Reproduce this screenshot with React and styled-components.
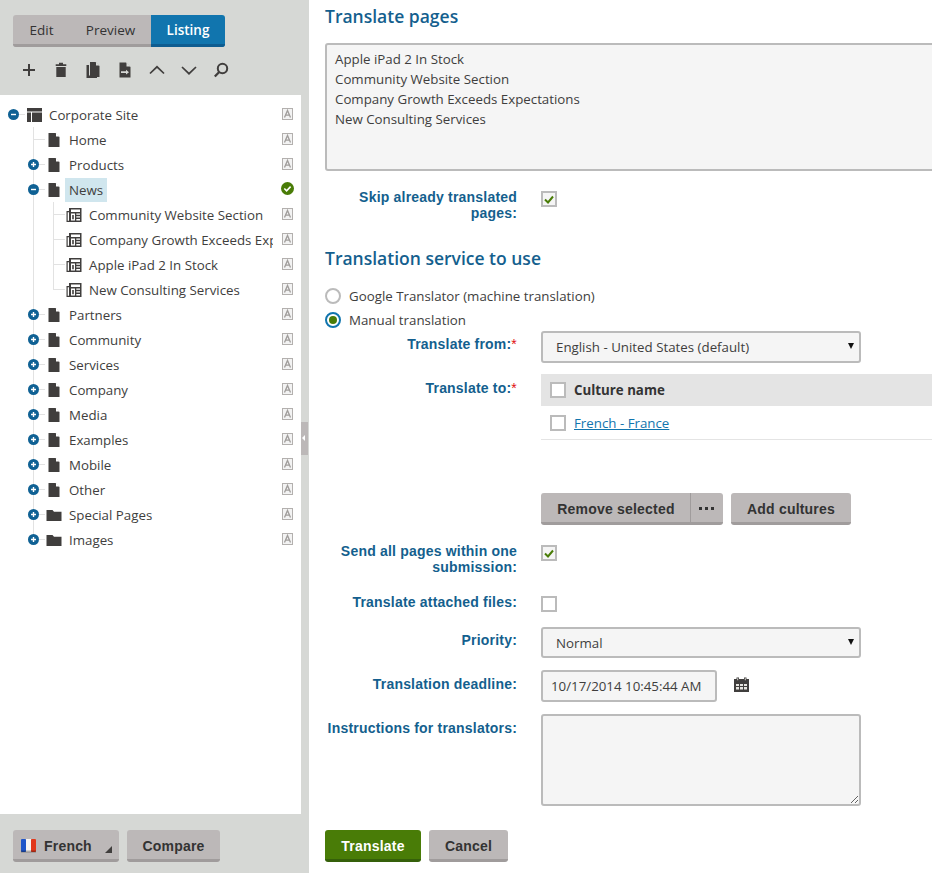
import React from 'react'
import styled, {createGlobalStyle} from 'styled-components'

const GlobalStyle = createGlobalStyle`
    html, body {
        margin: 0;
        padding: 0;
        background: #fff;
    }
    body {
        font-family: "Open Sans", "Noto Sans", sans-serif;
        font-size: 13.3px;
        color: #403e3d;
    }
`

const TREE = [
    {name: 'Home', icon: 'page'},
    {name: 'Products', icon: 'page', toggle: 'plus'},
    {
        name: 'News', icon: 'page', toggle: 'minus', selected: true, done: true,
        children: ['Community Website Section', 'Company Growth Exceeds Expectations', 'Apple iPad 2 In Stock', 'New Consulting Services'],
    },
    {name: 'Partners', icon: 'page', toggle: 'plus'},
    {name: 'Community', icon: 'page', toggle: 'plus'},
    {name: 'Services', icon: 'page', toggle: 'plus'},
    {name: 'Company', icon: 'page', toggle: 'plus'},
    {name: 'Media', icon: 'page', toggle: 'plus'},
    {name: 'Examples', icon: 'page', toggle: 'plus'},
    {name: 'Mobile', icon: 'page', toggle: 'plus'},
    {name: 'Other', icon: 'page', toggle: 'plus'},
    {name: 'Special Pages', icon: 'folder', toggle: 'plus'},
    {name: 'Images', icon: 'folder', toggle: 'plus'},
]

/* icons */
const Glyph = ({size = 16, children}) => (
    <svg width={size} height={size} viewBox="0 0 16 16" fill="#403e3d">{children}</svg>
)

const PlusIcon = () => <Glyph><path d="M7 2h2v5h5v2H9v5H7V9H2V7h5z"/></Glyph>
const TrashIcon = () => <Glyph><path d="M6 .8h4V2.300h3.300v1.700H2.700V2.300H6zM3.300 5h9.400V15H3.300z"/></Glyph>
const CopyIcon = () => (
    <Glyph>
        <path d="M5 0h5.500L14.500 4v11H5z"/>
        <path d="M11 0l3.500 3.500H11z" fill="#d6d8d5"/>
        <path d="M1.500 3H4v10.500h8V16H1.500z"/>
    </Glyph>
)
const MoveIcon = () => (
    <Glyph>
        <path d="M2.500 .5h6.500L13.500 5v10.500h-11z"/>
        <path d="M9.500 .5l4 4h-4z" fill="#d6d8d5"/>
        <path d="M4 9.300h5V7.800L12 10.200l-3 2.400v-1.500H4z" fill="#d6d8d5"/>
    </Glyph>
)
const UpIcon = () => <Glyph><path d="M1 11.500L8 4.800l7 6.700" fill="none" stroke="#403e3d" strokeWidth="1.700"/></Glyph>
const DownIcon = () => <Glyph><path d="M1 5L8 11.700 15 5" fill="none" stroke="#403e3d" strokeWidth="1.700"/></Glyph>
const SearchIcon = () => (
    <Glyph>
        <circle cx="9.500" cy="6.500" r="4.700" fill="none" stroke="#403e3d" strokeWidth="2"/>
        <path d="M6.500 9.800L1.800 14.500" stroke="#403e3d" strokeWidth="2.300" fill="none"/>
    </Glyph>
)
const SiteIcon = () => (
    <Glyph>
        <path d="M1 1h15v3.500H1zM1 5.500h4V15H1zM6 5.500h10V15H6z"/>
    </Glyph>
)
const PageIcon = () => (
    <Glyph>
        <path d="M2.500 1h7L13.500 5v10h-11z"/>
        <path d="M10 1l3.500 3.500H10z" fill="#fff"/>
    </Glyph>
)
const FolderIcon = () => (
    <Glyph><path d="M.5 3h6l1.500 1.800h7.500V14H.5z"/></Glyph>
)
const NewsIcon = () => (
    <Glyph>
        <path d="M3 1h12.500v14H.5V4H3z"/>
        <path d="M1.700 5.200H3V13.800H1.700z" fill="#fff"/>
        <path d="M5 2.500h9v2.500H5zM5 6.500h4v7H5zM10.300 6.500H14v1.300h-3.700zM10.300 9.300H14v1.300h-3.700zM10.300 12H14v1.500h-3.700z" fill="#fff"/>
        <path d="M6.200 8h1.600v4.200H6.200z"/>
    </Glyph>
)
const LangIcon = () => (
    <svg width="11" height="12" viewBox="0 0 11 12">
        <rect x="0.500" y="0.500" width="10" height="11" fill="#f3f3f3" stroke="#b3b0ae"/>
        <path d="M2.500 9.500L5.500 2.500 8.500 9.500M3.500 7.200h4" fill="none" stroke="#a09d9b" strokeWidth="1.300"/>
    </svg>
)
const DoneIcon = () => (
    <DoneSvg width="13" height="13" viewBox="0 0 13 13">
        <circle cx="6.500" cy="6.500" r="6.500" fill="#497c07"/>
        <path d="M3.300 6.500l2.300 2.300 4-4.200" fill="none" stroke="#fff" strokeWidth="1.600"/>
    </DoneSvg>
)
const ToggleIcon = ({kind}) => (
    <svg width="11" height="11" viewBox="0 0 11 11">
        <circle cx="5.500" cy="5.500" r="5.500" fill="#0f6194"/>
        <path d={kind === 'plus' ? 'M3 5.500h5M5.500 3v5' : 'M3 5.500h5'} stroke="#fff" strokeWidth="1.400"/>
    </svg>
)
const FlagIcon = () => (
    <svg width="15" height="14" viewBox="0 0 15 14">
        <rect x="0" y="0" width="5" height="13" rx="1" fill="#1f55c9"/>
        <rect x="5" y="0" width="5" height="13" fill="#f7f4f2"/>
        <rect x="10" y="0" width="5" height="13" rx="1" fill="#e2381c"/>
        <rect x="0" y="11.500" width="15" height="2" fill="#000" opacity="0.3"/>
    </svg>
)
const CalendarIcon = () => (
    <svg width="15" height="15" viewBox="0 0 15 15" fill="#403e3d">
        <path d="M0 2h2.500V.5h2.500V2h5V.5h2.500V2H15v13H0z"/>
        <path d="M3.200 1.300h1v2h-1zM10.800 1.300h1v2h-1z" fill="#d8d6d2"/>
        <path d="M2 7h3v2H2zM6 7h3v2H6zM10 7h3v2h-3zM2 10h3v2.500H2zM6 10h3v2.500H6zM10 10h3v2.500h-3z" fill="#e6e4e0"/>
    </svg>
)
const TickIcon = () => (
    <svg width="10" height="9" viewBox="0 0 10 9">
        <path d="M1 4.500l3 3 5-6" fill="none" stroke="#497c07" strokeWidth="2"/>
    </svg>
)
const DotsIcon = () => (
    <svg width="16" height="3" viewBox="0 0 16 3" fill="#333">
        <path d="M0 0h3v3H0zM6 0h3v3H6zM12 0h3v3h-3z"/>
    </svg>
)

const TOOLBAR = [PlusIcon, TrashIcon, CopyIcon, MoveIcon, UpIcon, DownIcon, SearchIcon]
const PAGE_ICONS = {page: PageIcon, folder: FolderIcon}

function TreeRow({depth, toggle, icon: Icon, name, selected, marker}) {
    return (
        <Row $depth={depth}>
            <Stub $depth={depth}/>
            <ToggleSlot>{toggle && <ToggleIcon kind={toggle}/>}</ToggleSlot>
            <IconSlot><Icon/></IconSlot>
            <NameClip><Name $selected={selected}>{name}</Name></NameClip>
            <Marker>{marker}</Marker>
        </Row>
    )
}

export default function App() {
    return (
        <Page>
            <GlobalStyle/>
            <Sidebar>
                <SideColumn>
                    <SideTop>
                        <Tabs>
                            <Tab $width={57}>Edit</Tab>
                            <Tab $width={81}>Preview</Tab>
                            <Tab $width={74} $active>Listing</Tab>
                        </Tabs>
                        <Toolbar>
                            {TOOLBAR.map((Icon, i) => <ToolButton key={i}><Icon/></ToolButton>)}
                        </Toolbar>
                    </SideTop>

                    <Tree>
                        <TreeRow depth={0} toggle="minus" icon={SiteIcon} name="Corporate Site" marker={<LangIcon/>}/>
                        <Branch $depth={1}>
                            {TREE.map(item => (
                                <React.Fragment key={item.name}>
                                    <TreeRow
                                        depth={1}
                                        toggle={item.toggle}
                                        icon={PAGE_ICONS[item.icon]}
                                        name={item.name}
                                        selected={item.selected}
                                        marker={item.done ? <DoneIcon/> : <LangIcon/>}
                                    />
                                    {item.children && (
                                        <Branch $depth={2}>
                                            {item.children.map(child => (
                                                <TreeRow key={child} depth={2} icon={NewsIcon} name={child} marker={<LangIcon/>}/>
                                            ))}
                                        </Branch>
                                    )}
                                </React.Fragment>
                            ))}
                        </Branch>
                    </Tree>

                    <SideBottom>
                        <FlagButton $width={106}>
                            <FlagIcon/>
                            <span>French</span>
                            <Corner/>
                        </FlagButton>
                        <GrayButton $width={93}>Compare</GrayButton>
                    </SideBottom>
                </SideColumn>
                <Splitter><SplitHandle/></Splitter>
            </Sidebar>

            <Content>
                <Heading>Translate pages</Heading>
                <PagesBox>
                    <div>Apple iPad 2 In Stock</div>
                    <div>Community Website Section</div>
                    <div>Company Growth Exceeds Expectations</div>
                    <div>New Consulting Services</div>
                </PagesBox>

                <FormRow $top={18}>
                    <Label>Skip already translated pages:</Label>
                    <CheckWrap><Check $on/></CheckWrap>
                </FormRow>

                <Heading $top={25}>Translation service to use</Heading>
                <Radios>
                    <RadioRow><Radio/>Google Translator (machine translation)</RadioRow>
                    <RadioRow><Radio $on/>Manual translation</RadioRow>
                </Radios>

                <FormRow $top={-1}>
                    <Label $pad={5}>Translate from:<Req>*</Req></Label>
                    <Select $height={32}>English - United States (default)</Select>
                </FormRow>

                <FormRow $top={11}>
                    <Label $pad={6}>Translate to:<Req>*</Req></Label>
                    <div>
                        <GridHead><Check/>Culture name</GridHead>
                        <GridRow><Check/><CultureLink href="#">French - France</CultureLink></GridRow>
                        <GridActions>
                            <ButtonGroup>
                                <GroupButton>Remove selected</GroupButton>
                                <DotsButton><DotsIcon/></DotsButton>
                            </ButtonGroup>
                            <GrayButton $width={120}>Add cultures</GrayButton>
                        </GridActions>
                    </div>
                </FormRow>

                <FormRow $top={18}>
                    <Label>Send all pages within one submission:</Label>
                    <CheckWrap><Check $on/></CheckWrap>
                </FormRow>

                <FormRow $top={19}>
                    <Label>Translate attached files:</Label>
                    <CheckWrap><Check/></CheckWrap>
                </FormRow>

                <FormRow $top={15}>
                    <Label $pad={5}>Priority:</Label>
                    <Select $height={31}>Normal</Select>
                </FormRow>

                <FormRow $top={12}>
                    <Label $pad={6}>Translation deadline:</Label>
                    <DateRow>
                        <DateInput readOnly value="10/17/2014 10:45:44 AM"/>
                        <CalendarSlot><CalendarIcon/></CalendarSlot>
                    </DateRow>
                </FormRow>

                <FormRow $top={12}>
                    <Label $pad={6}>Instructions for translators:</Label>
                    <Notes/>
                </FormRow>

                <Actions>
                    <GreenButton>Translate</GreenButton>
                    <GrayButton $width={79}>Cancel</GrayButton>
                </Actions>
            </Content>
        </Page>
    )
}

const DoneSvg = styled.svg`
    margin-top: -1px;
`

const Page = styled.div`
    display: flex;
    width: 932px;
    height: 873px;
    overflow: hidden;
`

const Sidebar = styled.aside`
    flex: 0 0 309px;
    display: flex;
    background: #d6d8d5;
`

const SideColumn = styled.div`
    width: 301px;
    display: flex;
    flex-direction: column;
`

const SideTop = styled.div`
    height: 95px;
    padding: 15px 0 0 13px;
    box-sizing: border-box;
`

const Tabs = styled.div`
    display: inline-flex;
    height: 32px;
    border-radius: 3px;
    overflow: hidden;
`

const Tab = styled.div`
    display: flex;
    align-items: center;
    justify-content: center;
    box-sizing: border-box;
    width: ${p => p.$width}px;
    font-size: 13.5px;
    font-weight: ${p => p.$active ? 600 : 400};
    color: ${p => p.$active ? '#fff' : '#333'};
    background: ${p => p.$active ? '#1175ae' : '#bcb8b8'};
    border-bottom: 3px solid ${p => p.$active ? '#0e5c90' : '#a09c9c'};
`

const Toolbar = styled.div`
    display: flex;
    margin: 7px 0 0 0;
`

const ToolButton = styled.div`
    width: 32px;
    height: 32px;
    display: flex;
    align-items: center;
    justify-content: center;
`

const Tree = styled.div`
    flex: 1;
    background: #fff;
    padding-top: 7px;
`

const Branch = styled.div`
    position: relative;

    &::before {
        content: '';
        position: absolute;
        left: ${p => p.$depth === 1 ? 33 : 53}px;
        top: 0;
        bottom: 12px;
        width: 1px;
        background: #e2e2e2;
    }
`

const Row = styled.div`
    position: relative;
    display: flex;
    align-items: center;
    height: 25px;
    padding-left: ${p => 8 + (p.$depth * 20)}px;
    padding-right: 7px;
`

const Stub = styled.span`
    position: absolute;
    left: ${p => 13 + (p.$depth * 20)}px;
    top: 12px;
    width: 12px;
    height: 1px;
    background: #e2e2e2;
`

const ToggleSlot = styled.span`
    position: relative;
    flex: 0 0 11px;
    display: flex;
    height: 11px;
    margin-right: 7px;
`

const IconSlot = styled.span`
    position: relative;
    flex: 0 0 16px;
    display: flex;
    margin-right: 3px;
`

const NameClip = styled.span`
    flex: 1;
    overflow: hidden;
    white-space: nowrap;
    margin-right: 8px;
`

const Name = styled.span`
    display: inline-block;
    padding: 0 4px;
    line-height: 24px;
    background: ${p => p.$selected ? '#d0e6ee' : 'transparent'};
`

const Marker = styled.span`
    flex: 0 0 13px;
    display: flex;
    justify-content: center;
    margin-top: -1px;
`

const SideBottom = styled.div`
    height: 59px;
    padding: 16px 0 0 13px;
    box-sizing: border-box;
    display: flex;
    gap: 8px;
`

const Splitter = styled.div`
    position: relative;
    flex: 1;
`

const SplitHandle = styled.div`
    position: absolute;
    top: 422px;
    left: 0;
    width: 7px;
    height: 33px;
    background: #bcb8b8;

    &::after {
        content: '';
        position: absolute;
        left: 1px;
        top: 13px;
        border: 3px solid transparent;
        border-right-color: #fff;
        border-left-width: 0;
    }
`

const GrayButton = styled.div`
    position: relative;
    width: ${p => p.$width}px;
    height: 32px;
    box-sizing: border-box;
    display: flex;
    align-items: center;
    justify-content: center;
    padding-top: 2px;
    border-radius: 3px;
    background: #bcb8b8;
    border-bottom: 3px solid #a09c9c;
    font-family: "Liberation Sans", Arial, sans-serif;
    font-size: 14px;
    font-weight: 700;
    color: #333;
    letter-spacing: 0.2px;
`

const FlagButton = styled(GrayButton)`
    justify-content: flex-start;
    gap: 8px;
    padding-left: 8px;
`

const Corner = styled.i`
    position: absolute;
    right: 7px;
    bottom: 6px;
    border-style: solid;
    border-width: 0 0 7px 7px;
    border-color: transparent transparent #403e3d transparent;
`

const Content = styled.main`
    flex: 1;
    min-width: 0;
    padding-left: 16px;
    overflow: hidden;
`

const Heading = styled.h2`
    margin: ${p => p.$top ?? 4}px 0 0;
    font-size: 17.5px;
    line-height: 24px;
    font-weight: 600;
    color: #145f8e;
`

const PagesBox = styled.div`
    width: 640px;
    height: 128px;
    box-sizing: border-box;
    margin-top: 15px;
    padding: 4px 8px;
    border: 2px solid #bbb;
    border-radius: 3px;
    background: #f5f5f5;
    line-height: 20px;
`

const FormRow = styled.div`
    display: grid;
    grid-template-columns: 192px 1fr;
    column-gap: 24px;
    margin-top: ${p => p.$top}px;
`

const Label = styled.label`
    padding-top: ${p => p.$pad ?? 0}px;
    text-align: right;
    font-family: "Liberation Sans", Arial, sans-serif;
    font-size: 14px;
    line-height: 16px;
    font-weight: 700;
    color: #145f8e;
    letter-spacing: 0.2px;
`

const Req = styled.span`
    color: #e01010;
    font-weight: 400;
`

const CheckWrap = styled.div`
    display: flex;
    padding-top: 2px;
`

const Check = styled.span.attrs(p => ({children: p.$on ? <TickIcon/> : null}))`
    flex: 0 0 16px;
    width: 16px;
    height: 16px;
    box-sizing: border-box;
    display: flex;
    align-items: center;
    justify-content: center;
    border: 2px solid #bbb;
    background: ${p => p.$on ? '#f5f5f5' : '#fff'};
`

const Radios = styled.div`
    margin-top: 14px;
`

const RadioRow = styled.div`
    display: flex;
    align-items: center;
    gap: 8px;
    height: 24px;
`

const Radio = styled.span`
    width: 16px;
    height: 16px;
    box-sizing: border-box;
    border-radius: 50%;
    border: 2px solid ${p => p.$on ? '#1175ae' : '#bbb'};
    background: #fff;
    padding: 2px;

    &::after {
        content: '';
        display: ${p => p.$on ? 'block' : 'none'};
        width: 8px;
        height: 8px;
        border-radius: 50%;
        background: #497c07;
    }
`

const Select = styled.div`
    position: relative;
    width: 320px;
    height: ${p => p.$height}px;
    box-sizing: border-box;
    display: flex;
    align-items: center;
    padding-left: 13px;
    border: 2px solid #bbb;
    border-radius: 3px;
    background: #f5f5f5;

    &::after {
        content: '';
        position: absolute;
        right: 5px;
        top: 10px;
        border-style: solid;
        border-width: 6px 3px 0 3px;
        border-color: #111 transparent transparent transparent;
    }
`

const GridHead = styled.div`
    display: flex;
    align-items: center;
    gap: 8px;
    height: 32px;
    padding-left: 9px;
    background: #e4e4e4;
    font-weight: 700;
    color: #333;
`

const GridRow = styled.div`
    display: flex;
    align-items: center;
    gap: 8px;
    height: 33px;
    padding-left: 9px;
    border-bottom: 1px solid #e4e4e4;
`

const CultureLink = styled.a`
    color: #1175ae;
`

const GridActions = styled.div`
    display: flex;
    gap: 8px;
    margin-top: 53px;
`

const ButtonGroup = styled.div`
    display: flex;
`

const GroupButton = styled(GrayButton)`
    width: 150px;
    border-radius: 3px 0 0 3px;
    box-shadow: inset -1px 0 0 #a09c9c;
`

const DotsButton = styled(GrayButton)`
    width: 32px;
    border-radius: 0 3px 3px 0;
`

const DateRow = styled.div`
    display: flex;
    align-items: center;
    gap: 17px;
`

const CalendarSlot = styled.span`
    display: flex;
    margin-bottom: 3px;
`

const DateInput = styled.input`
    width: 176px;
    height: 32px;
    box-sizing: border-box;
    padding: 0 8px;
    border: 2px solid #bbb;
    border-radius: 3px;
    background: #f5f5f5;
    font: inherit;
    color: inherit;
    outline: none;
`

const Notes = styled.textarea`
    display: block;
    width: 320px;
    height: 92px;
    box-sizing: border-box;
    border: 2px solid #bbb;
    border-radius: 3px;
    background: #f5f5f5;
    outline: none;
`

const Actions = styled.div`
    display: flex;
    gap: 8px;
    margin-top: 24px;
`

const GreenButton = styled(GrayButton)`
    width: 96px;
    background: #497c07;
    border-bottom-color: #35600a;
    color: #fff;
`
